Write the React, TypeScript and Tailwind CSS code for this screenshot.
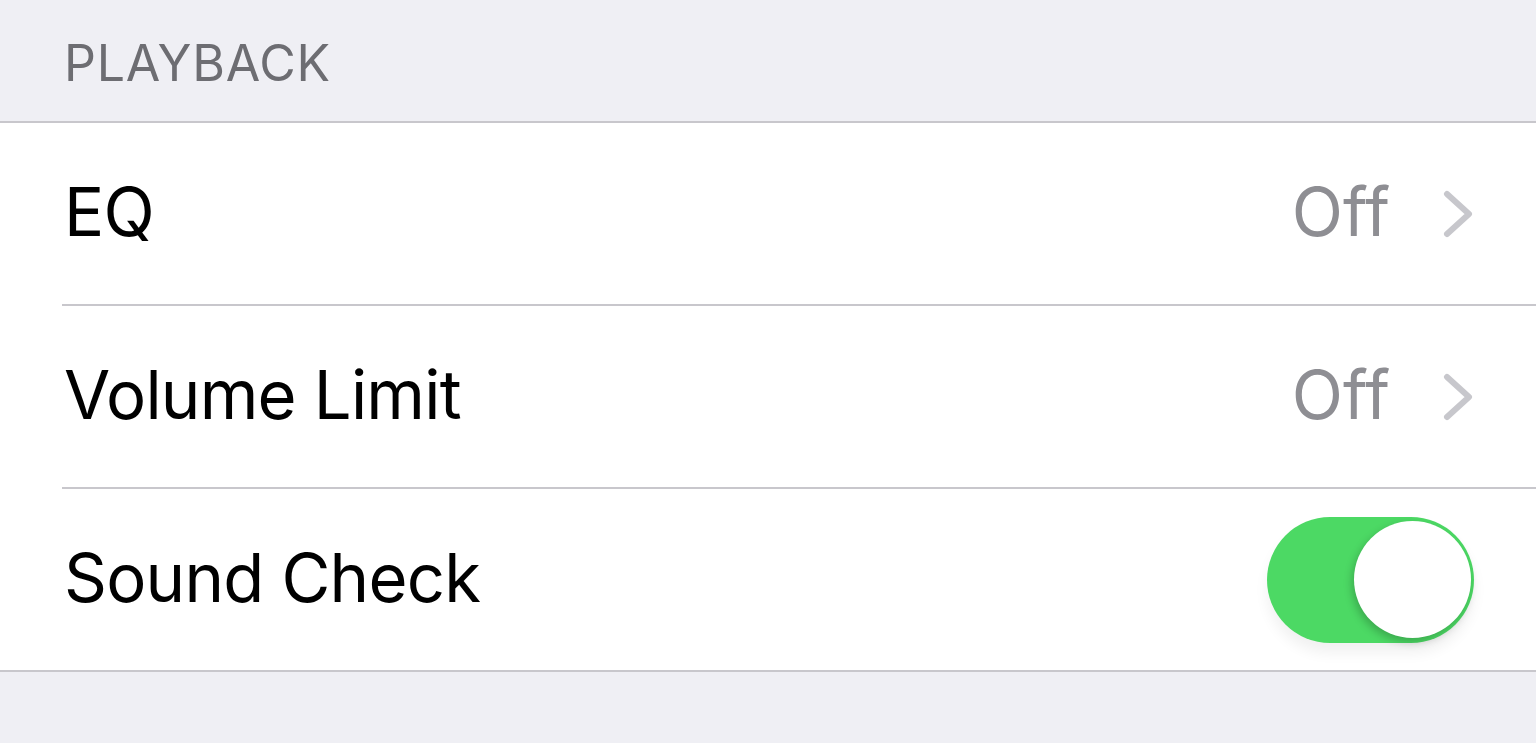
import React from 'react'

function Chevron() {
  return (
    <svg width="32" height="48" viewBox="0 0 32 48" className="ml-[52px]">
      <path d="M5 4 L27 24 L5 44" fill="none" stroke="#c7c7cc" strokeWidth="6" strokeLinecap="round" strokeLinejoin="round" />
    </svg>
  )
}

function Row({ label, value, toggle }: { label: string; value?: string; toggle?: boolean }) {
  return (
    <div className="flex h-[181px] items-center justify-between pl-16 pr-[62px]">
      <span className="pb-1 text-[67px] leading-none tracking-[-0.8px] text-black">{label}</span>
      {toggle ? (
        <div className="flex h-[126px] w-[207px] items-center justify-end rounded-full bg-[#4cd964] p-[3px] shadow-[0_10px_14px_rgba(0,0,0,0.06)]">
          <div className="h-[117px] w-[117px] rounded-full bg-white shadow-[-2px_4px_8px_rgba(0,0,0,0.22)]" />
        </div>
      ) : (
        <div className="flex items-center">
          <span className="pb-1 text-[67px] leading-none text-[#8e8e93]">{value}</span>
          <Chevron />
        </div>
      )}
    </div>
  )
}

export default function App() {
  return (
    <div className="min-h-[743px] bg-[#efeff4]" style={{ fontFamily: 'Inter, "Liberation Sans", sans-serif' }}>
      <div className="flex h-[121px] items-center pl-16 pt-1">
        <span className="text-[50px] leading-none tracking-[0.8px] text-[#6d6d72]">PLAYBACK</span>
      </div>
      <div className="border-y-2 border-[#c8c7cc] bg-white">
        <Row label="EQ" value="Off" />
        <div className="ml-[62px] h-[2px] bg-[#c8c7cc]" />
        <Row label="Volume Limit" value="Off" />
        <div className="ml-[62px] h-[2px] bg-[#c8c7cc]" />
        <Row label="Sound Check" toggle />
      </div>
    </div>
  )
}
